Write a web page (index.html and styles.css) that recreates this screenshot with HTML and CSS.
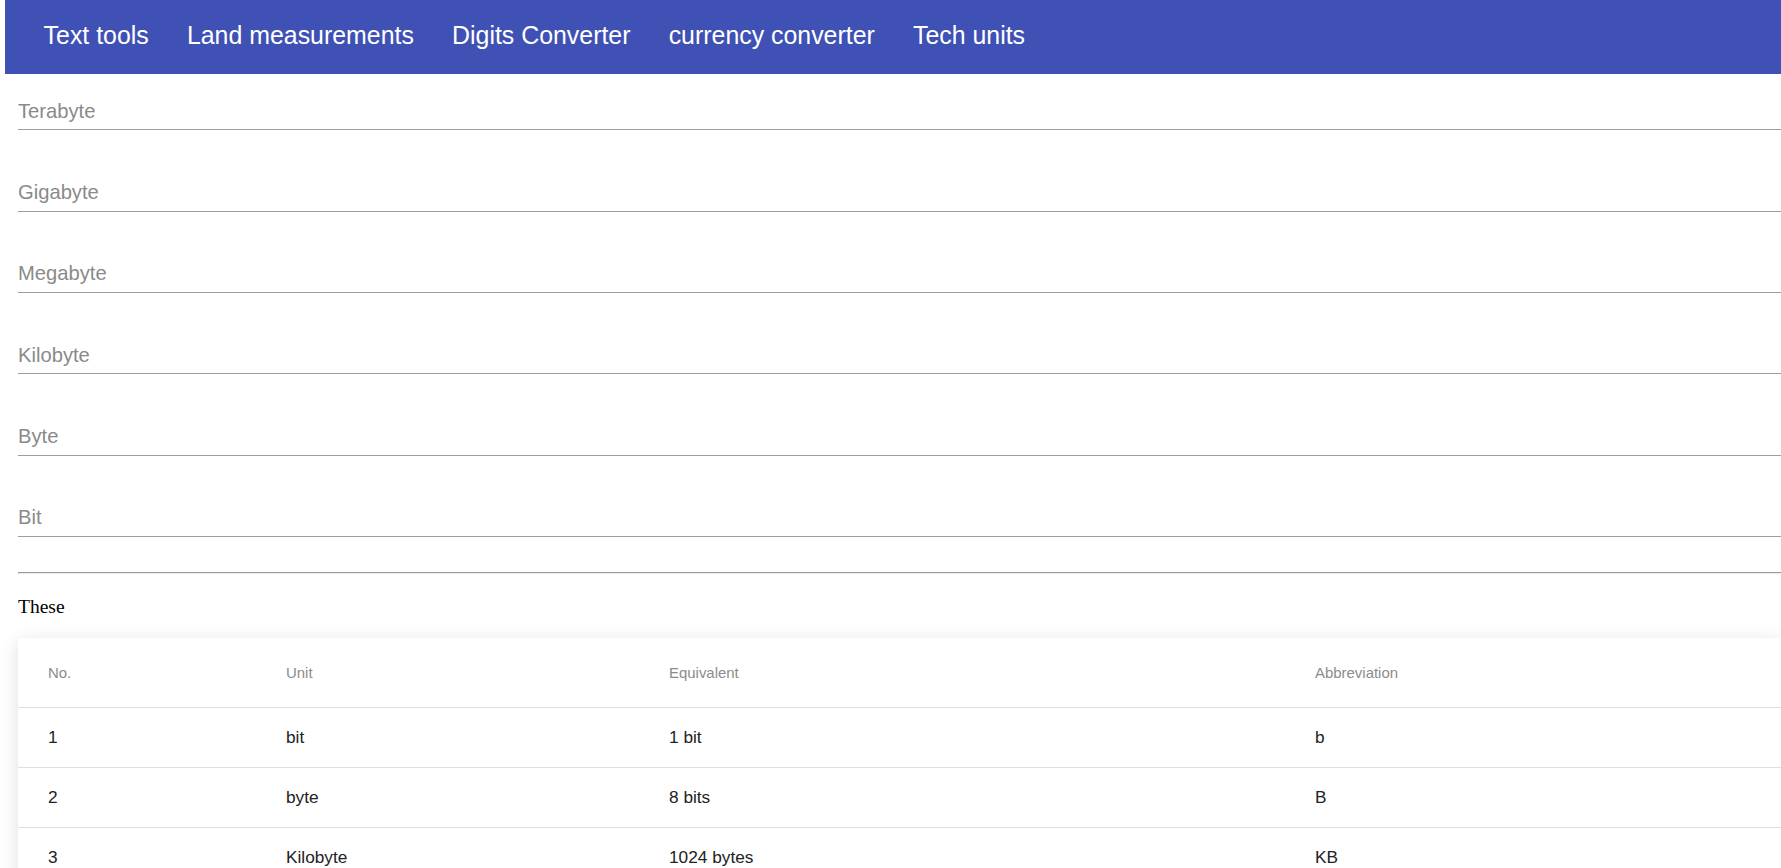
FILE: index.html
```html
<!DOCTYPE html>
<html lang="en">
<head>
<meta charset="utf-8">
<title>Tech units</title>
<link rel="stylesheet" href="styles.css">
</head>
<body>
<nav class="topnav">
  <ul class="nav-links">
    <li><a href="#">Text tools</a></li>
    <li><a href="#">Land measurements</a></li>
    <li><a href="#">Digits Converter</a></li>
    <li><a href="#">currency converter</a></li>
    <li><a href="#">Tech units</a></li>
  </ul>
</nav>
<main class="content">
  <form class="unit-form">
    <input class="unit-input" type="text" placeholder="Terabyte">
    <input class="unit-input" type="text" placeholder="Gigabyte">
    <input class="unit-input" type="text" placeholder="Megabyte">
    <input class="unit-input" type="text" placeholder="Kilobyte">
    <input class="unit-input" type="text" placeholder="Byte">
    <input class="unit-input" type="text" placeholder="Bit">
  </form>
  <hr class="divider">
  <p class="intro">These</p>
  <div class="card">
    <table class="units-table">
      <colgroup>
        <col class="c-no">
        <col class="c-unit">
        <col class="c-eq">
        <col class="c-abbr">
      </colgroup>
      <thead>
        <tr><th>No.</th><th>Unit</th><th>Equivalent</th><th>Abbreviation</th></tr>
      </thead>
      <tbody>
        <tr><td>1</td><td>bit</td><td>1 bit</td><td>b</td></tr>
        <tr><td>2</td><td>byte</td><td>8 bits</td><td>B</td></tr>
        <tr><td>3</td><td>Kilobyte</td><td>1024 bytes</td><td>KB</td></tr>
        <tr><td>4</td><td>Megabyte</td><td>1024 Kilobytes</td><td>MB</td></tr>
        <tr><td>5</td><td>Gigabyte</td><td>1024 Megabytes</td><td>GB</td></tr>
        <tr><td>6</td><td>Terabyte</td><td>1024 Gigabytes</td><td>TB</td></tr>
      </tbody>
    </table>
  </div>
</main>
</body>
</html>
```
FILE: styles.css
```css
html, body {
  overflow: hidden;
}
body {
  margin: 0;
  font-family: "Liberation Sans", Arial, sans-serif;
  background: #ffffff;
  color: rgba(0, 0, 0, 0.87);
}

.topnav {
  margin-left: 5px;
  height: 74px;
  background: #3f51b5;
}
.nav-links {
  display: flex;
  margin: 0;
  padding: 0 0 0 19.5px;
  list-style: none;
}
.nav-links a {
  display: block;
  padding: 0 19.1px;
  font-size: 24.9px;
  line-height: 70px;
  color: #ffffff;
  text-decoration: none;
}

.content {
  padding-left: 18px;
}

.unit-form {
  display: flex;
  flex-direction: column;
  gap: 25.2px;
}
.unit-input {
  display: block;
  box-sizing: border-box;
  width: 100%;
  height: 56.2px;
  margin: 0;
  padding: 19px 0 0 0;
  border: none;
  border-bottom: 1px solid #9e9e9e;
  outline: none;
  background: transparent;
  font-family: "Liberation Sans", Arial, sans-serif;
  font-size: 20.2px;
  color: rgba(0, 0, 0, 0.87);
}
.unit-input::placeholder {
  color: #8a8a8a;
}

.divider {
  height: 0;
  margin: 35px 0 0;
  border: none;
  border-top: 1px solid #9a9a9a;
  border-left: 1px solid #9a9a9a;
  border-bottom: 1px solid #ececec;
}

.intro {
  margin: 22px 0 0;
  font-family: "Liberation Serif", "Times New Roman", serif;
  font-size: 19.5px;
  color: #000000;
}

.card {
  margin-top: 20px;
  background: #ffffff;
  box-shadow: 0 4px 18px rgba(0, 0, 0, 0.13);
}
.units-table {
  width: 100%;
  border-collapse: collapse;
  table-layout: fixed;
}
.c-no { width: 238px; }
.c-unit { width: 383px; }
.c-eq { width: 646px; }

.units-table th,
.units-table td {
  padding: 0 0 0 30px;
  text-align: left;
  vertical-align: middle;
}
.units-table th {
  height: 69px;
  font-size: 14.95px;
  font-weight: normal;
  color: #8c8c8c;
}
.units-table td {
  height: 59px;
  border-top: 1px solid #e0e0e0;
  font-size: 17.25px;
  color: #222222;
}
```
